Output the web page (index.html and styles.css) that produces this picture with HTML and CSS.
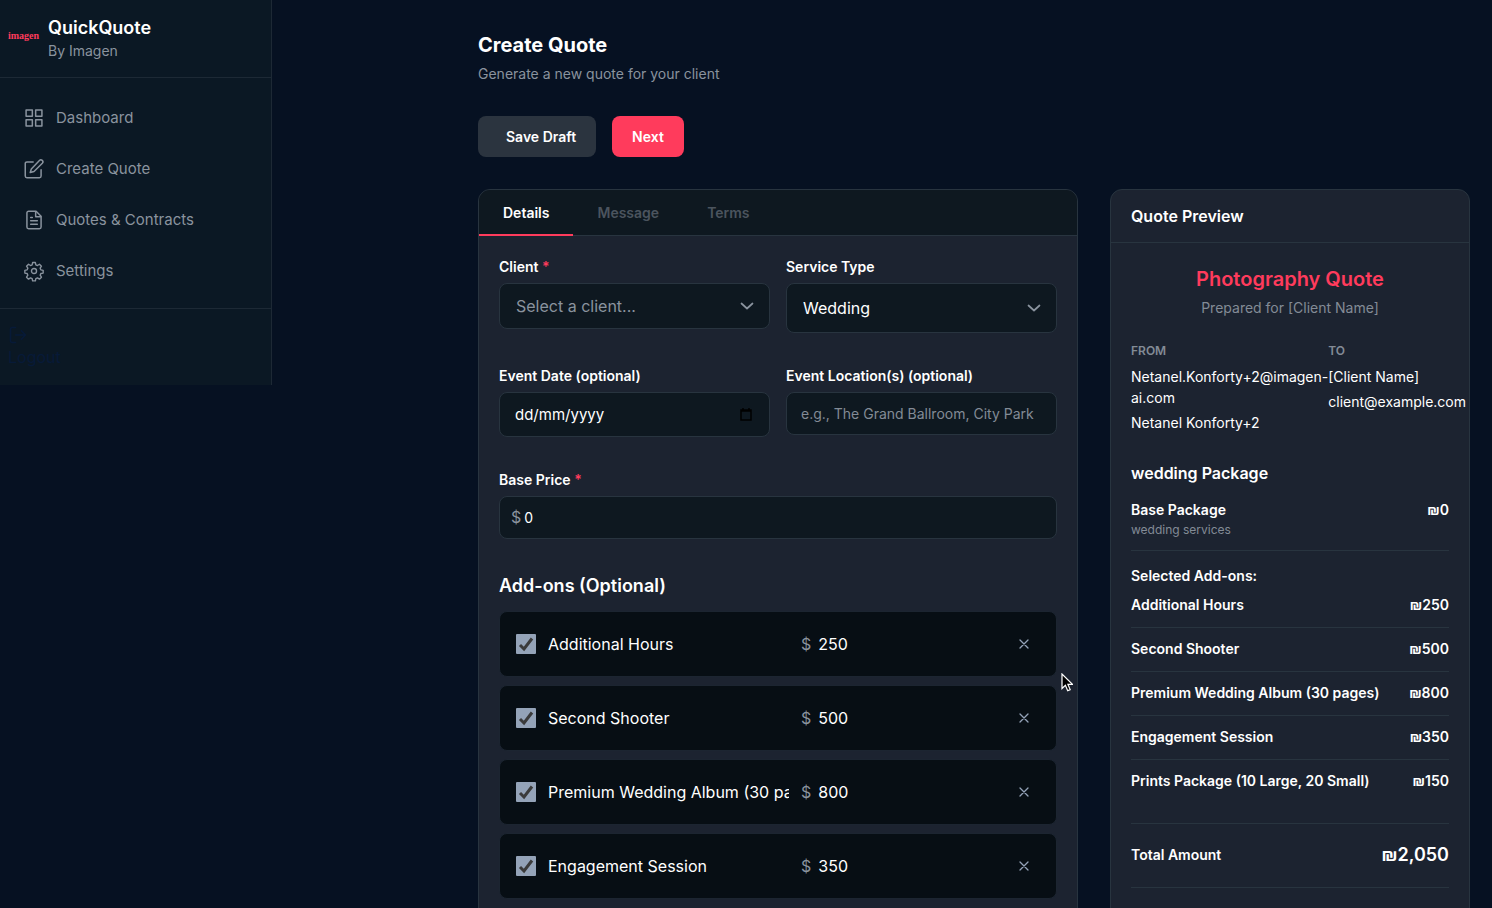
FILE: index.html
```html
<!DOCTYPE html>
<html lang="en">
<head>
    <meta charset="UTF-8">
    <meta name="viewport" content="width=device-width, initial-scale=1.0">
    <title>QuickQuote - Create Quote</title>
    <link rel="stylesheet" href="styles.css">
</head>
<body>
    <div class="app">
        <aside class="sidebar">
            <div class="brand">
                <span class="brand-logo">imagen</span>
                <div>
                    <div class="brand-name">QuickQuote</div>
                    <div class="brand-sub">By Imagen</div>
                </div>
            </div>
            <nav class="nav">
                <a class="nav-link" href="#">
                    <svg class="icon" viewBox="0 0 24 24"><path d="M2.500 2.500h7.500v7.500H2.500zM14 2.500h7.500v7.500H14zM2.500 14h7.500v7.500H2.500zM14 14h7.500v7.500H14z"/></svg>
                    Dashboard
                </a>
                <a class="nav-link" href="#">
                    <svg class="icon" viewBox="0 0 24 24"><path d="M11 3.500H3.500a2 2 0 0 0-2 2v15a2 2 0 0 0 2 2h15a2 2 0 0 0 2-2V13"/><path d="M18.500 1.800a2.300 2.300 0 0 1 3.500 3.300L12 15l-4.500 1.300L8.800 12z"/></svg>
                    Create Quote
                </a>
                <a class="nav-link" href="#">
                    <svg class="icon" viewBox="0 0 24 24"><path d="M14.500 1.500H5.500a2 2 0 0 0-2 2v17a2 2 0 0 0 2 2h13a2 2 0 0 0 2-2v-13z"/><path d="M14 2v6h6M16 13H8M16 17H8M10 9H8"/></svg>
                    Quotes &amp; Contracts
                </a>
                <a class="nav-link" href="#">
                    <svg class="icon" viewBox="-1 -1 26 26"><circle cx="12" cy="12" r="3.300"/><path d="M10.200 1h3.600l.6 3 2.100.9 2.600-1.700 2.600 2.600-1.700 2.600.9 2.100 3 .6v3.600l-3 .6-.9 2.100 1.700 2.600-2.600 2.600-2.600-1.700-2.100.9-.6 3h-3.600l-.6-3-2.100-.9-2.600 1.700-2.600-2.600L4 17.400l-.9-2.100-3-.6v-3.600l3-.6L4 8.400 2.300 5.800l2.600-2.600 2.600 1.700L9.600 4z"/></svg>
                    Settings
                </a>
            </nav>
            <div class="sidebar-footer">
                <a class="logout" href="#">
                    <svg class="icon" viewBox="0 0 24 24"><path d="M9 21H5a2 2 0 0 1-2-2V5a2 2 0 0 1 2-2h4M16 17l5-5-5-5M21 12H9"/></svg>
                    <span>Logout</span>
                </a>
            </div>
        </aside>

        <main class="main">
            <header class="page-header">
                <h1>Create Quote</h1>
                <p>Generate a new quote for your client</p>
            </header>
            <div class="actions">
                <button class="btn btn-draft" type="button">Save Draft</button>
                <button class="btn btn-next" type="button">Next</button>
            </div>

            <div class="columns">
                <section class="card">
                    <div class="tabs">
                        <button class="tab active" type="button">Details</button>
                        <button class="tab" type="button">Message</button>
                        <button class="tab" type="button">Terms</button>
                    </div>
                    <form class="form">
                        <div class="form-row">
                            <div>
                                <label class="label" for="client">Client <span class="required">*</span></label>
                                <select class="field select select-empty" id="client">
                                    <option>Select a client...</option>
                                </select>
                            </div>
                            <div>
                                <label class="label" for="service">Service Type</label>
                                <select class="field select select-tall" id="service">
                                    <option>Wedding</option>
                                </select>
                            </div>
                        </div>
                        <div class="form-row">
                            <div>
                                <label class="label" for="date">Event Date (optional)</label>
                                <input class="field date" id="date" type="text" placeholder="dd/mm/yyyy">
                            </div>
                            <div>
                                <label class="label" for="location">Event Location(s) (optional)</label>
                                <input class="field" id="location" type="text" placeholder="e.g., The Grand Ballroom, City Park">
                            </div>
                        </div>
                        <div>
                            <label class="label" for="price">Base Price <span class="required">*</span></label>
                            <div class="field money">
                                <span class="currency">$</span>
                                <input class="bare" id="price" type="text" value="0">
                            </div>
                        </div>

                        <div>
                            <h2>Add-ons (Optional)</h2>
                            <div class="addons">
                                <div class="addon">
                                    <input class="check" type="checkbox" aria-label="Include" checked>
                                    <input class="bare addon-name" type="text" aria-label="Name" value="Additional Hours">
                                    <div class="addon-price"><span class="currency">$</span><input class="bare" type="text" aria-label="Price" value="250"></div>
                                    <button class="remove" type="button" aria-label="Remove"><svg viewBox="0 0 10 10"><path d="M1 1l8 8M9 1l-8 8"/></svg></button>
                                </div>
                                <div class="addon">
                                    <input class="check" type="checkbox" aria-label="Include" checked>
                                    <input class="bare addon-name" type="text" aria-label="Name" value="Second Shooter">
                                    <div class="addon-price"><span class="currency">$</span><input class="bare" type="text" aria-label="Price" value="500"></div>
                                    <button class="remove" type="button" aria-label="Remove"><svg viewBox="0 0 10 10"><path d="M1 1l8 8M9 1l-8 8"/></svg></button>
                                </div>
                                <div class="addon">
                                    <input class="check" type="checkbox" aria-label="Include" checked>
                                    <input class="bare addon-name" type="text" aria-label="Name" value="Premium Wedding Album (30 pages)">
                                    <div class="addon-price"><span class="currency">$</span><input class="bare" type="text" aria-label="Price" value="800"></div>
                                    <button class="remove" type="button" aria-label="Remove"><svg viewBox="0 0 10 10"><path d="M1 1l8 8M9 1l-8 8"/></svg></button>
                                </div>
                                <div class="addon">
                                    <input class="check" type="checkbox" aria-label="Include" checked>
                                    <input class="bare addon-name" type="text" aria-label="Name" value="Engagement Session">
                                    <div class="addon-price"><span class="currency">$</span><input class="bare" type="text" aria-label="Price" value="350"></div>
                                    <button class="remove" type="button" aria-label="Remove"><svg viewBox="0 0 10 10"><path d="M1 1l8 8M9 1l-8 8"/></svg></button>
                                </div>
                            </div>
                        </div>
                    </form>
                </section>

                <section class="card preview">
                    <h3 class="preview-head">Quote Preview</h3>
                    <div class="preview-body">
                        <div class="preview-title">Photography Quote</div>
                        <div class="preview-sub">Prepared for [Client Name]</div>
                        <div class="parties">
                            <div>
                                <h4>FROM</h4>
                                <p class="from-email">Netanel.Konforty+2@imagen-<wbr>ai.com</p>
                                <p>Netanel Konforty+2</p>
                            </div>
                            <div>
                                <h4>TO</h4>
                                <p>[Client Name]</p>
                                <p>client@example.com</p>
                            </div>
                        </div>
                        <div class="package">wedding Package</div>
                        <div class="line">
                            <div>
                                <div>Base Package</div>
                                <div class="line-note">wedding services</div>
                            </div>
                            <span>₪0</span>
                        </div>
                        <div class="selected">Selected Add-ons:</div>
                        <div class="line"><span>Additional Hours</span><span>₪250</span></div>
                        <div class="line"><span>Second Shooter</span><span>₪500</span></div>
                        <div class="line"><span>Premium Wedding Album (30 pages)</span><span>₪800</span></div>
                        <div class="line"><span>Engagement Session</span><span>₪350</span></div>
                        <div class="line line-last"><span>Prints Package (10 Large, 20 Small)</span><span>₪150</span></div>
                        <div class="total"><span>Total Amount</span><span class="total-value">₪2,050</span></div>
                    </div>
                </section>
            </div>
        </main>
        <svg class="cursor" viewBox="0 0 12 19"><path d="M1 1v14.500l3.400-3.200 2.300 5.400 2.500-1.100-2.300-5.200h4.600z"/></svg>
    </div>
</body>
</html>
```
FILE: styles.css
```css
* {
    box-sizing: border-box;
    margin: 0;
}
body {
    background-color: #061122;
    color: #fff;
    font-family: Inter, "Liberation Sans", sans-serif;
    font-size: 14px;
    line-height: 21px;
}
button, input, select {
    font: inherit;
    color: inherit;
}
.app {
    position: relative;
    display: flex;
    align-items: flex-start;
    height: 100vh;
    overflow: hidden;
}

/* Sidebar */
.sidebar {
    width: 272px;
    flex-shrink: 0;
    background-color: #0b1824;
    border-right: 1px solid #1d2935;
}
.brand {
    display: flex;
    align-items: center;
    gap: 8px;
    padding: 15px 8px 16px;
    border-bottom: 1px solid #1d2935;
}
.brand-logo {
    width: 32px;
    padding-bottom: 4px;
    color: #ff3b5c;
    font-family: "Liberation Serif", serif;
    font-size: 10px;
    font-weight: bold;
    line-height: 16px;
}
.brand-name {
    font-size: 18px;
    font-weight: 600;
    line-height: 25px;
}
.brand-sub {
    color: #8a939e;
}
.nav {
    display: flex;
    flex-direction: column;
    gap: 4px;
    padding: 16px 8px 14px;
    border-bottom: 1px solid #1d2935;
}
.nav-link {
    display: flex;
    align-items: center;
    gap: 12px;
    height: 47px;
    padding: 0 16px;
    color: #8a939e;
    font-size: 15px;
    text-decoration: none;
}
.icon {
    width: 20px;
    height: 20px;
    fill: none;
    stroke: currentColor;
    stroke-width: 1.8;
    stroke-linecap: round;
    stroke-linejoin: round;
    overflow: visible;
}
.sidebar-footer {
    padding: 16px 8px 17px;
}
.logout {
    display: inline-flex;
    flex-direction: column;
    gap: 2px;
    color: #071a38;
    font-size: 16px;
    text-decoration: none;
}

/* Page */
.main {
    flex: 1;
    padding: 32px 22px 0 206px;
}
h1 {
    font-size: 20px;
    font-weight: 700;
    line-height: 26px;
}
.page-header p {
    margin-top: 5px;
    color: #8a939e;
}
.actions {
    display: flex;
    gap: 16px;
    margin: 32px 0;
}
.btn {
    padding: 10px 20px;
    border: none;
    border-radius: 8px;
    font-weight: 600;
    cursor: pointer;
}
.btn-draft {
    padding-left: 28px;
    background-color: #2b343f;
}
.btn-next {
    background-color: #ff3b5c;
}
.columns {
    display: grid;
    grid-template-columns: 1fr 360px;
    gap: 32px;
}
.card {
    background-color: #1c2330;
    border: 1px solid #28343f;
    border-radius: 12px;
    overflow: hidden;
}

/* Tabs */
.tabs {
    display: flex;
    height: 46px;
    background-color: #0e1820;
    border-bottom: 1px solid #28343f;
}
.tab {
    height: 46px;
    padding: 0 24px;
    background: none;
    border: none;
    border-bottom: 2px solid transparent;
    color: #4b545e;
    font-weight: 600;
    cursor: pointer;
}
.tab.active {
    color: #fff;
    border-bottom-color: #ff3b5c;
}

/* Form */
.form {
    display: flex;
    flex-direction: column;
    gap: 32px;
    padding: 20px;
}
.form-row {
    display: grid;
    grid-template-columns: 1fr 1fr;
    gap: 16px;
    align-items: start;
}
.label {
    display: block;
    margin-bottom: 6px;
    font-weight: 600;
}
.required {
    color: #ff3b5c;
}
.field {
    display: block;
    width: 100%;
    height: 43px;
    padding: 0 14px;
    background-color: #0e1820;
    border: 1px solid #28343f;
    border-radius: 8px;
}
.field::placeholder {
    color: #838b96;
}
.select {
    height: 46px;
    padding: 0 16px;
    appearance: none;
    background-image: url("data:image/svg+xml,%3Csvg xmlns='http://www.w3.org/2000/svg' viewBox='0 0 14 8' fill='none' stroke='%238a939e' stroke-width='1.700' stroke-linecap='round' stroke-linejoin='round'%3E%3Cpath d='M1.500 1.500l5.500 5 5.500-5'/%3E%3C/svg%3E");
    background-repeat: no-repeat;
    background-position: right 15px center;
    background-size: 14px 8px;
    font-size: 16px;
}
.select-empty {
    color: #8a939e;
}
.select-tall {
    height: 50px;
}
.date {
    height: 45px;
    padding: 0 15px;
    background-image: url("data:image/svg+xml,%3Csvg xmlns='http://www.w3.org/2000/svg' viewBox='0 0 12 13' fill='none' stroke='black' stroke-width='1.500'%3E%3Cpath d='M1 2h10v10H1zM1 3h10M3 0v2M9 0v2'/%3E%3C/svg%3E");
    background-repeat: no-repeat;
    background-position: right 17px center;
    background-size: 12px 13px;
    font-size: 15px;
}
.date::placeholder {
    color: #fff;
}
.money {
    display: flex;
    align-items: center;
    gap: 3px;
    padding: 0 11px;
}
.currency {
    color: #8a939e;
    font-size: 16px;
}
.bare {
    flex: 1;
    min-width: 0;
    padding: 0;
    background: none;
    border: none;
    outline: none;
}
h2 {
    margin-bottom: 10px;
    font-size: 18px;
    font-weight: 600;
    line-height: 30px;
}
.addons {
    display: flex;
    flex-direction: column;
    gap: 8px;
}
.addon {
    display: flex;
    align-items: center;
    gap: 12px;
    height: 66px;
    padding: 0 16px;
    background-color: #070e14;
    border: 1px solid #1c2531;
    border-radius: 8px;
    font-size: 16px;
}
.check {
    width: 20px;
    height: 20px;
    appearance: none;
    border-radius: 1px;
    background-color: #94a3b8;
}
.check:checked {
    background-image: url("data:image/svg+xml,%3Csvg xmlns='http://www.w3.org/2000/svg' viewBox='0 0 20 20' fill='none' stroke='%233b3b3b' stroke-width='3'%3E%3Cpath d='M4 11l4 4 8-10.500'/%3E%3C/svg%3E");
}
.addon-price {
    display: flex;
    align-items: center;
    gap: 7px;
    width: 195px;
}
.remove {
    display: flex;
    align-items: center;
    justify-content: center;
    width: 32px;
    height: 32px;
    padding: 0;
    background: none;
    border: none;
    color: #94a3b8;
    cursor: pointer;
}
.remove svg {
    width: 10px;
    height: 10px;
    fill: none;
    stroke: currentColor;
    stroke-width: 1.3;
    stroke-linecap: round;
}

/* Preview */
.preview-head {
    padding: 14px 20px;
    border-bottom: 1px solid #28343f;
    font-size: 16px;
    font-weight: 600;
    line-height: 24px;
}
.preview-body {
    padding: 20px;
}
.preview-title {
    color: #ff3b5c;
    font-size: 20px;
    font-weight: 600;
    line-height: 32px;
    text-align: center;
}
.preview-sub {
    margin: 2px 0 24px;
    color: #838b96;
    text-align: center;
}
.parties {
    display: grid;
    grid-template-columns: min-content 1fr;
    margin-bottom: 24px;
}
.parties h4 {
    margin-bottom: 6px;
    color: #838b96;
    font-size: 12px;
    font-weight: 600;
    line-height: 18px;
}
.parties p {
    margin-bottom: 4px;
    white-space: nowrap;
}
.parties .from-email {
    white-space: normal;
}
.package {
    margin-bottom: 4px;
    font-size: 16px;
    font-weight: 600;
    line-height: 24px;
}
.line {
    display: flex;
    justify-content: space-between;
    padding: 10px 0 12px;
    border-bottom: 1px solid #28343f;
    font-weight: 600;
}
.line-note {
    margin-top: 2px;
    color: #838b96;
    font-size: 12px;
    font-weight: 400;
    line-height: 16px;
}
.line-last {
    border-bottom: none;
}
.selected {
    margin-top: 16px;
    font-weight: 600;
    line-height: 17px;
}
.total {
    display: flex;
    align-items: center;
    justify-content: space-between;
    margin-top: 20px;
    padding: 17px 0 19px;
    border-top: 1px solid #28343f;
    border-bottom: 1px solid #28343f;
    font-weight: 600;
    line-height: 27px;
}
.total-value {
    font-size: 18px;
}

/* Pointer lies over the page */
.cursor {
    position: absolute;
    left: 1061px;
    top: 673px;
    width: 12px;
    height: 19px;
    fill: #000;
    stroke: #fff;
    stroke-width: 1.2;
}
```
